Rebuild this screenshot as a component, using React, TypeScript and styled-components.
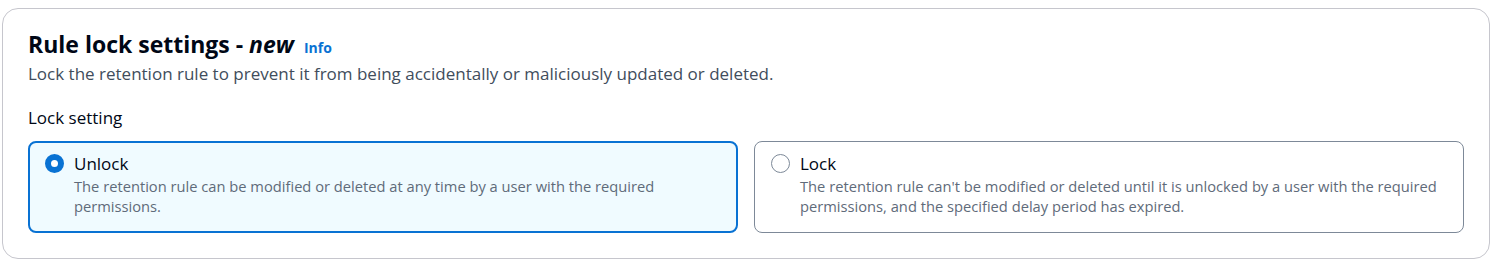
import React, { useState } from 'react';
import styled, { createGlobalStyle } from 'styled-components';

const GlobalStyle = createGlobalStyle`
  body {
    margin: 0;
    background: #ffffff;
    font-family: "Open Sans", "Noto Sans", sans-serif;
    color: #000716;
  }
`;

const Page = styled.div`
  padding: 8px 10px 8px 2px;
`;

const Card = styled.section`
  border: 1px solid #c6c6cd;
  border-radius: 16px;
  padding: 21px 25px 25px 25px;
  background: #ffffff;
`;

const Title = styled.h2`
  margin: 0;
  display: flex;
  align-items: baseline;
  gap: 10px;
  font-size: 23px;
  line-height: 28px;
  font-weight: 700;
  color: #000716;

  em {
    font-style: italic;
  }
`;

const InfoLink = styled.a`
  font-size: 14px;
  font-weight: 700;
  color: #0972d3;
  text-decoration: none;
`;

const Description = styled.p`
  margin: 1px 0 0;
  font-size: 17px;
  line-height: 22px;
  color: #414d5c;
`;

const FieldLabel = styled.div`
  margin-top: 22px;
  font-size: 17px;
  line-height: 22px;
  color: #000716;
`;

const TileGrid = styled.div`
  margin-top: 12px;
  display: grid;
  grid-template-columns: 1fr 1fr;
  gap: 16px;
`;

const Tile = styled.label<{ $checked: boolean }>`
  display: flex;
  align-items: flex-start;
  gap: 10px;
  box-sizing: border-box;
  padding: ${(p) => (p.$checked ? '9px 15px 15px' : '10px 16px 16px')};
  border: ${(p) => (p.$checked ? '2px solid #0972d3' : '1px solid #7d8998')};
  border-radius: 8px;
  background: ${(p) => (p.$checked ? '#f0fbff' : '#ffffff')};
  cursor: pointer;
`;

const Radio = styled.span<{ $checked: boolean }>`
  flex: none;
  width: 19px;
  height: 19px;
  margin-top: 2px;
  box-sizing: border-box;
  border-radius: 50%;
  border: ${(p) => (p.$checked ? '6px solid #0972d3' : '1.5px solid #7d8998')};
  background: #ffffff;
`;

const TileText = styled.div`
  display: flex;
  flex-direction: column;
`;

const TileLabel = styled.span`
  font-size: 17px;
  line-height: 24px;
  color: #000716;
`;

const TileDescription = styled.span`
  font-size: 14.7px;
  line-height: 20px;
  color: #5f6b7a;
`;

const options = [
  {
    value: 'unlock',
    label: 'Unlock',
    description:
      'The retention rule can be modified or deleted at any time by a user with the required permissions.',
  },
  {
    value: 'lock',
    label: 'Lock',
    description:
      "The retention rule can't be modified or deleted until it is unlocked by a user with the required permissions, and the specified delay period has expired.",
  },
];

export default function App() {
  const [value, setValue] = useState('unlock');

  return (
    <>
      <GlobalStyle />
      <Page>
        <Card>
          <Title>
            <span>
              Rule lock settings - <em>new</em>
            </span>
            <InfoLink href="#">Info</InfoLink>
          </Title>
          <Description>
            Lock the retention rule to prevent it from being accidentally or maliciously updated or deleted.
          </Description>
          <FieldLabel>Lock setting</FieldLabel>
          <TileGrid>
            {options.map((opt) => {
              const checked = value === opt.value;
              return (
                <Tile key={opt.value} $checked={checked} onClick={() => setValue(opt.value)}>
                  <Radio $checked={checked} />
                  <TileText>
                    <TileLabel>{opt.label}</TileLabel>
                    <TileDescription>{opt.description}</TileDescription>
                  </TileText>
                </Tile>
              );
            })}
          </TileGrid>
        </Card>
      </Page>
    </>
  );
}
